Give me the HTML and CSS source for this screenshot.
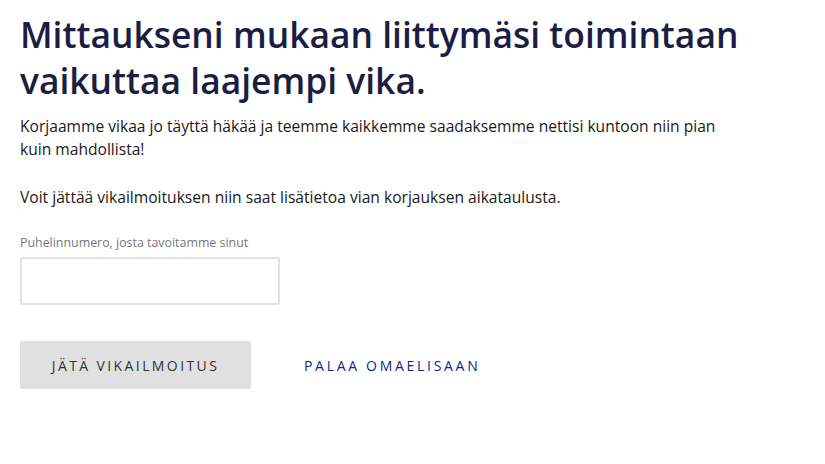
FILE: index.html
```html
<!DOCTYPE html>
<html lang="fi">
<head>
<meta charset="UTF-8">
<meta name="viewport" content="width=device-width, initial-scale=1.0">
<title>Vikailmoitus</title>
<link rel="stylesheet" href="styles.css">
</head>
<body>

<div class="container">
    <h1>Mittaukseni mukaan liittymäsi toimintaan vaikuttaa laajempi vika.</h1>

    <p class="lead">Korjaamme vikaa jo täyttä häkää ja teemme kaikkemme saadaksemme nettisi kuntoon niin pian kuin mahdollista!</p>
    <p class="lead">Voit jättää vikailmoituksen niin saat lisätietoa vian korjauksen aikataulusta.</p>

    <div class="form-group">
        <label for="phone">Puhelinnumero, josta tavoitamme sinut</label>
        <input type="text" id="phone">
    </div>

    <div class="actions">
        <button class="btn-report">Jätä vikailmoitus</button>
        <a href="#" class="link-back">Palaa OmaElisaan</a>
    </div>
</div>

</body>
</html>
```

FILE: styles.css
```css
body {
    font-family: "Open Sans", Arial, sans-serif;
    background-color: #fff;
    color: #1a1a1a;
    margin: 0;
    padding: 0;
}

.container {
    max-width: 740px;
    padding: 11px 20px;
}

h1 {
    font-size: 35.4px;
    font-weight: 600;
    line-height: 46px;
    color: #1b1e42;
    margin: 0 0 12px;
}

.lead {
    font-size: 15.6px;
    line-height: 23px;
    margin: 0 0 25px;
    max-width: 720px;
}

.form-group {
    margin-top: 4px;
}

.form-group label {
    display: block;
    font-size: 12.4px;
    color: #777;
    margin-bottom: 6px;
}

.form-group input[type="text"] {
    width: 260px;
    height: 48px;
    box-sizing: border-box;
    border: 2px solid #e2e2e2;
    border-radius: 2px;
    padding: 0 12px;
    font-size: 15px;
}

.actions {
    display: flex;
    align-items: center;
    gap: 53px;
    margin-top: 36px;
}

.btn-report {
    width: 231px;
    height: 48px;
    background-color: #e0e0e0;
    border: none;
    border-radius: 2px;
    color: #333;
    font-family: inherit;
    font-size: 14px;
    letter-spacing: 2.4px;
    text-transform: uppercase;
    cursor: pointer;
}

.link-back {
    color: #0b2590;
    font-size: 14px;
    letter-spacing: 2.7px;
    text-transform: uppercase;
    text-decoration: none;
}
```
